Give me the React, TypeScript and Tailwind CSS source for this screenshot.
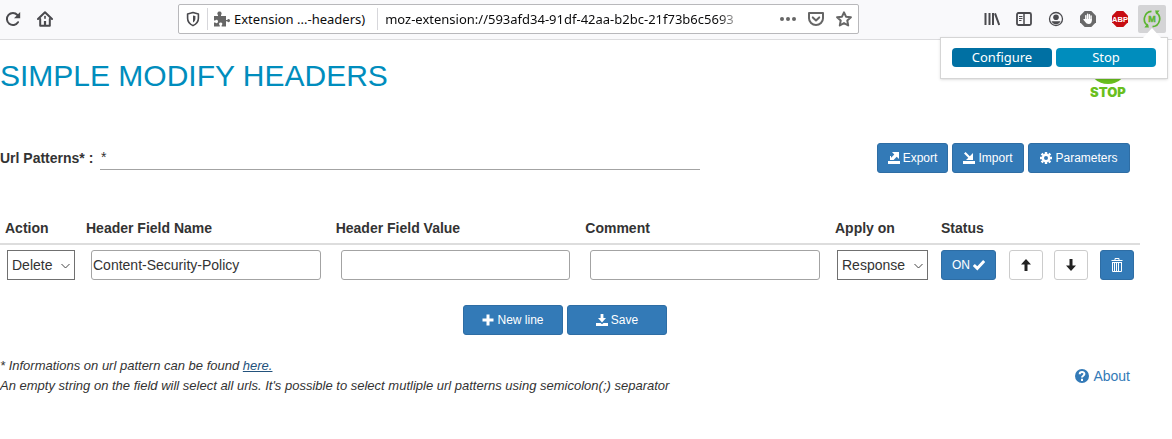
import React, { useState } from "react";

type IconProps = { className?: string };

const ReloadIcon = ({ className }: IconProps) => (
  <svg viewBox="0 0 16 16" className={className} fill="none" stroke="currentColor" strokeWidth="2" strokeLinecap="round">
    <path d="M13 11.200A6 6 0 1 1 12.400 4" />
    <path d="M15.200 1v6.200H9z" fill="currentColor" stroke="none" />
  </svg>
);

const HomeIcon = ({ className }: IconProps) => (
  <svg viewBox="0 0 16 16" className={className} fill="none" stroke="currentColor" strokeWidth="2" strokeLinecap="round" strokeLinejoin="round">
    <path d="M1 8l7-6.800L15 8" />
    <path d="M3.200 8v6.800h9.600V8" />
    <path d="M6.900 10h2.200v4.500H6.900z" fill="currentColor" stroke="none" />
    <path d="M8 5.600v1.600" strokeWidth="1.600" />
  </svg>
);

const ShieldIcon = ({ className }: IconProps) => (
  <svg viewBox="0 0 16 16" className={className} fill="none" stroke="currentColor" strokeWidth="1.600" strokeLinejoin="round">
    <path d="M8 1.600L13.400 3v4.200c0 3.400-2 5.800-5.400 7.400-3.400-1.600-5.400-4-5.400-7.400V3z" />
    <path d="M8 4.400v7.200c1.600-1 2.400-2.400 2.400-4.400V5z" fill="currentColor" stroke="none" />
  </svg>
);

const PuzzleIcon = ({ className }: IconProps) => (
  <svg viewBox="0 0 16 16" className={className} fill="currentColor">
    <path d="M0 5h4V4C3 3 3 .4 5.500.4S8 3 7 4v1h5v4h1.200c.6-1.500 2.800-1.200 2.800.6s-2.200 2.200-2.800.6H12V15.600H7.600V14.400c1.300-.8.9-2.800-.9-2.800s-2.200 2-.9 2.800v1.200H0v-4.200h1.200c.9 1.300 2.800.8 2.800-1s-1.900-2.300-2.800-1H0z" />
  </svg>
);

const PocketIcon = ({ className }: IconProps) => (
  <svg viewBox="0 0 16 16" className={className} fill="none" stroke="currentColor" strokeWidth="2" strokeLinecap="round" strokeLinejoin="round">
    <path d="M1 2h14v5.200a7 6.800 0 0 1-14 0z" />
    <path d="M4.800 6.400L8 9.400l3.200-3" />
  </svg>
);

const StarIcon = ({ className }: IconProps) => (
  <svg viewBox="0 0 16 16" className={className} fill="none" stroke="currentColor" strokeWidth="2" strokeLinejoin="round">
    <path d="M8 1.300l2 4.400 4.900.6-3.600 3.300.9 4.900L8 12.100l-4.200 2.400.9-4.900L1.100 6.300 6 5.700z" />
  </svg>
);

const LibraryIcon = ({ className }: IconProps) => (
  <svg viewBox="0 0 16 16" className={className} fill="none" stroke="currentColor" strokeWidth="2">
    <path d="M1.500 2v12M5.500 2v12M9 2v12M11 2.300L15.200 14" />
  </svg>
);

const SidebarIcon = ({ className }: IconProps) => (
  <svg viewBox="0 0 16 16" className={className} fill="none" stroke="currentColor">
    <rect x="1" y="2" width="14" height="12" rx="1.500" strokeWidth="1.800" />
    <path d="M8 2v12" strokeWidth="1.500" />
    <path d="M3 5.500h3.500M3 7.500h3.500M3 9.500h2.500" />
  </svg>
);

const AccountIcon = ({ className }: IconProps) => (
  <svg viewBox="0 0 16 16" className={className}>
    <circle cx="8" cy="8" r="6.500" fill="none" stroke="currentColor" strokeWidth="1.300" />
    <circle cx="8" cy="6.200" r="2.800" fill="currentColor" />
    <path d="M3.500 10.300h9c-.8 1.900-2.400 2.900-4.500 2.900s-3.700-1-4.500-2.900z" fill="currentColor" />
  </svg>
);

const HandIcon = ({ className }: IconProps) => (
  <svg viewBox="0 0 16 16" className={className}>
    <path d="M4.700 0h6.600L16 4.700v6.600L11.300 16H4.700L0 11.300V4.700z" fill="#696969" />
    <g stroke="#fff" strokeWidth="1.400" strokeLinecap="round" fill="none">
      <path d="M5.800 9V4.600M7.600 8V3.300M9.400 8V3.600M11.100 9V5" />
    </g>
    <path d="M5.100 8h6.700v1.500c0 2-1.100 3.500-3 3.500S6.200 12.300 5.300 11L3.400 8.800c-.3-.8.500-1.200 1.100-.7z" fill="#fff" />
  </svg>
);

const AdblockIcon = ({ className }: IconProps) => (
  <svg viewBox="0 0 16 16" className={className}>
    <path d="M4.700 0h6.600L16 4.700v6.600L11.300 16H4.700L0 11.300V4.700z" fill="#c70d12" />
    <text x="8" y="10.800" textAnchor="middle" fontSize="7.500" fontWeight="700" fill="#fff" fontFamily="Liberation Sans, sans-serif">ABP</text>
  </svg>
);

const ModifyIcon = ({ className }: IconProps) => (
  <svg viewBox="0 0 18 18" className={className} fill="none" stroke="#5cb531" strokeWidth="1.700">
    <path d="M5.200 15.800A7.800 7.800 0 0 1 8.500 1.300" />
    <path d="M12.800 2.200A7.800 7.800 0 0 1 9.500 16.700" />
    <path d="M12 .4l4.600.2-3 4zM6 17.600l-4.600-.2 3-4z" fill="#5cb531" stroke="none" />
    <text x="9" y="12.200" textAnchor="middle" fontSize="9" fontWeight="700" fill="#5cb531" stroke="#5cb531" strokeWidth=".4" fontFamily="Liberation Sans, sans-serif">M</text>
  </svg>
);

const ExportIcon = () => (
  <svg viewBox="0 0 12 12" className="size-3" fill="currentColor">
    <path d="M0 9h12v3H0zM4 0h7v7L8.700 4.800 5.600 8H2.300V6.500l4-4zM2 4h1v4H2z" />
  </svg>
);
const ImportIcon = () => (
  <svg viewBox="0 0 12 12" className="size-3" fill="currentColor">
    <path d="M0 9h12v3H0zM10 8H3l2.300-2.200L1 1.600 2.600 0l4.200 4.300L10 1z" />
  </svg>
);
const GearIcon = () => (
  <svg viewBox="0 0 12 12" className="size-3">
    <circle cx="6" cy="6" r="3.200" fill="none" stroke="currentColor" strokeWidth="2.400" />
    <path d="M6 0v2M6 10v2M0 6h2M10 6h2M1.600 1.600l1.600 1.600M8.800 8.800l1.600 1.600M10.400 1.600L8.800 3.200M3.200 8.800l-1.600 1.600" stroke="currentColor" strokeWidth="2.400" />
  </svg>
);
const CheckIcon = () => (
  <svg viewBox="0 0 12 12" className="size-3" fill="none" stroke="currentColor" strokeWidth="3">
    <path d="M.8 6l3.500 3.400L11.200 2" />
  </svg>
);
const PlusIcon = () => (
  <svg viewBox="0 0 12 12" className="size-3" stroke="currentColor" strokeWidth="3">
    <path d="M6 .5v11M.5 6h11" />
  </svg>
);
const SaveIcon = () => (
  <svg viewBox="0 0 12 12" className="size-3" fill="currentColor">
    <path d="M4.600 0h2.800v4H10L6 8.400 2 4h2.600zM0 9h4.500L6 10.300 7.500 9H12v3H0z" />
  </svg>
);
const UpIcon = () => (
  <svg viewBox="0 0 12 12" className="size-3" fill="currentColor">
    <path d="M6 0l5 5.600H7.500V12h-3V5.600H1z" />
  </svg>
);
const DownIcon = () => (
  <svg viewBox="0 0 12 12" className="size-3" fill="currentColor">
    <path d="M6 12L1 6.400h3.500V0h3v6.400H11z" />
  </svg>
);
const TrashIcon = () => (
  <svg viewBox="0 0 12 14" className="h-3.5 w-3" fill="none" stroke="currentColor">
    <path d="M4 2V.5h4V2M.5 2.500h11M1 4.500h10" />
    <path d="M1.500 4v9.500h9V4M3.500 5v8M5.500 5v8M7.500 5v8" />
  </svg>
);
const HelpIcon = () => (
  <svg viewBox="0 0 14 14" className="size-3.5">
    <circle cx="7" cy="7" r="7" fill="#337ab7" />
    <path d="M4.700 5.300c0-3 4.700-2.900 4.700-.2C9.400 6.900 7 6.600 7 8.600M7 9.800V12" fill="none" stroke="#fff" strokeWidth="2" />
  </svg>
);
const Chevron = () => (
  <svg viewBox="0 0 9 6" className="pointer-events-none absolute top-[13px] right-[5px] h-1.5 w-[9px]" fill="none" stroke="#444">
    <path d="M.5 1l4 4 4-4" />
  </svg>
);

const primary =
  "flex h-[30px] items-center justify-center gap-[3px] rounded-[3px] border border-[#2e6da4] bg-[#337ab7] text-xs text-white";
const plain =
  "flex h-[30px] w-[34px] items-center justify-center rounded-[3px] border border-[#ccc] bg-white text-[#222]";
const field = "block h-[30px] w-full rounded-[3px] border border-[#a3a3a3] bg-white px-px text-sm text-[#333]";
const select = "block h-[30px] w-full appearance-none border border-[#707070] bg-white pl-1 text-sm text-[#333]";

function Toolbar() {
  return (
    <header className="relative flex h-10 items-center border-b border-[#dcdcde] bg-[#f9f9fb] pb-px font-['Noto_Sans',sans-serif] text-[#4a4a4e]">
      <button aria-label="Reload" className="ml-[5px]"><ReloadIcon className="size-4" /></button>
      <button aria-label="Home" className="ml-4"><HomeIcon className="size-4" /></button>
      <div className="ml-[125px] flex h-[30px] max-w-[681px] flex-1 items-center rounded-[2px] border border-[#b8b8bb] bg-white">
        <button aria-label="Tracking protection" className="ml-1.5"><ShieldIcon className="size-4" /></button>
        <div className="ml-1.5 flex h-[22px] items-center border-x border-[#d7d7db] pr-3 pl-1.5">
          <PuzzleIcon className="size-4 text-[#666]" />
          <span className="ml-1 text-[13px] whitespace-nowrap text-[#0c0c0d]">Extension ...-headers)</span>
        </div>
        <label className="flex min-w-0 flex-1 [mask-image:linear-gradient(to_right,black_92%,transparent_99%)]">
          <span className="sr-only">Address</span>
          <input
            className="ml-[7px] w-full min-w-0 text-[13px] text-[#0c0c0d] outline-none"
            defaultValue="moz-extension://593afd34-91df-42aa-b2bc-21f73b6c5693"
          />
        </label>
        <button aria-label="Page actions" className="ml-8">
          <svg viewBox="0 0 16 16" className="size-4" fill="#666">
            <circle cx="2" cy="8" r="2" /><circle cx="8" cy="8" r="2" /><circle cx="14" cy="8" r="2" />
          </svg>
        </button>
        <button aria-label="Save to Pocket" className="ml-3 text-[#666]"><PocketIcon className="size-4" /></button>
        <button aria-label="Bookmark" className="mr-1.5 ml-3 text-[#666]"><StarIcon className="size-4" /></button>
      </div>
      <div className="ml-auto flex items-center gap-4 pr-1.5">
        <button aria-label="Library"><LibraryIcon className="size-4" /></button>
        <button aria-label="Sidebars"><SidebarIcon className="size-4" /></button>
        <button aria-label="Account"><AccountIcon className="size-4" /></button>
        <button aria-label="Blocker"><HandIcon className="size-4" /></button>
        <button aria-label="Adblock Plus"><AdblockIcon className="size-4" /></button>
        <button aria-label="Simple Modify Headers" className="-ml-1.5 flex size-7 items-center justify-center rounded-[2px] bg-[#d4d4d6]">
          <ModifyIcon className="size-[18px]" />
        </button>
      </div>
      <Popup />
    </header>
  );
}

function Popup() {
  return (
    <div className="absolute top-[37px] right-1 z-10 flex gap-1 border border-[#d5d5d5] bg-white px-[11px] pt-2.5 pb-[11px] shadow-sm">
      <svg viewBox="0 0 18 10" className="absolute -top-[10px] right-1.5 h-2.5 w-[18px]">
        <path d="M0 10L9 0l9 10z" fill="#fff" />
      </svg>
      <button className="h-[19px] w-[100px] rounded bg-[#0070a3] text-[13px] leading-[19px] text-white">Configure</button>
      <button className="h-[19px] w-[100px] rounded bg-[#008dbd] text-[13px] leading-[19px] text-white">Stop</button>
    </div>
  );
}

export default function App() {
  const [pattern, setPattern] = useState("*");
  const [name, setName] = useState("Content-Security-Policy");
  return (
    <div className="min-h-screen bg-white font-['Liberation_Sans',Arial,sans-serif] text-sm leading-5 text-[#333]">
      <Toolbar />
      <main className="max-w-[1140px]">
        <div className="flex items-start justify-between pr-3">
          <h1 className="mt-4 text-[30px] leading-10 text-[#008dbd]">SIMPLE MODIFY HEADERS</h1>
          <button className="flex flex-col items-center text-[#6abf1e]">
            <svg viewBox="0 0 40 44" className="h-11 w-10">
              <circle cx="20" cy="24" r="20" fill="currentColor" />
            </svg>
            <span className="font-[Inter,sans-serif] text-[13px] leading-4 font-black">STOP</span>
          </button>
        </div>
        <div className="mt-[43px] flex items-start justify-between pr-2.5">
          <div className="flex w-[700px] items-center">
            <label htmlFor="pattern" className="w-[100px] pt-0.5 font-bold whitespace-nowrap">Url Patterns* :</label>
            <input
              id="pattern"
              value={pattern}
              onChange={(e) => setPattern(e.target.value)}
              className="h-[27px] min-w-0 flex-1 border-b border-[#a3a3a3] px-px pt-0.5 outline-none"
            />
          </div>
          <div className="flex gap-1">
            <button className={`${primary} w-[71px]`}><ExportIcon />Export</button>
            <button className={`${primary} w-[72px]`}><ImportIcon />Import</button>
            <button className={`${primary} w-[102px]`}><GearIcon />Parameters</button>
          </div>
        </div>
        <table className="mt-[40px] w-full table-fixed text-left">
          <colgroup>
            <col className="w-[81px]" />
            <col /><col /><col />
            <col className="w-[106px]" />
            <col className="w-[68px]" />
            <col className="w-[45px]" />
            <col className="w-[46px]" />
            <col className="w-[45px]" />
          </colgroup>
          <thead>
            <tr className="border-b-2 border-[#ddd]">
              <th className="p-[5px]">Action</th>
              <th className="p-[5px]">Header Field Name</th>
              <th className="p-[5px]">Header Field Value</th>
              <th className="p-[5px]">Comment</th>
              <th className="p-[5px]">Apply on</th>
              <th className="p-[5px]">Status</th>
              <th /><th /><th />
            </tr>
          </thead>
          <tbody>
            <tr>
              <td className="py-[5px] pr-1.5 pl-[7px]">
                <div className="relative">
                  <select aria-label="Action" className={select}><option>Delete</option><option>Add</option><option>Modify</option></select>
                  <Chevron />
                </div>
              </td>
              <td className="px-2.5 py-[5px]">
                <input aria-label="Header Field Name" className={field} value={name} onChange={(e) => setName(e.target.value)} />
              </td>
              <td className="px-2.5 py-[5px]"><input aria-label="Header Field Value" className={field} /></td>
              <td className="px-2.5 py-[5px]"><input aria-label="Comment" className={field} /></td>
              <td className="py-[5px] pr-2 pl-[7px]">
                <div className="relative">
                  <select aria-label="Apply on" className={select}><option>Response</option><option>Request</option></select>
                  <Chevron />
                </div>
              </td>
              <td className="p-[5px]"><button className={`${primary} w-[55px]`}>ON<CheckIcon /></button></td>
              <td className="p-[5px]"><button aria-label="Move up" className={plain}><UpIcon /></button></td>
              <td className="p-[5px]"><button aria-label="Move down" className={plain}><DownIcon /></button></td>
              <td className="p-[5px]"><button aria-label="Delete line" className={`${primary} w-[34px]`}><TrashIcon /></button></td>
            </tr>
          </tbody>
        </table>
        <div className="mt-5 flex justify-center gap-1 pr-2.5">
          <button className={`${primary} w-[100px]`}><PlusIcon />New line</button>
          <button className={`${primary} w-[100px]`}><SaveIcon />Save</button>
        </div>
        <footer className="mt-[21px] flex items-center justify-between pr-2.5">
          <p className="text-[13px] italic">
            * Informations on url pattern can be found <a href="#patterns" className="text-[#23527c] underline">here.</a>
            <br />
            An empty string on the field will select all urls. It's possible to select mutliple url patterns using semicolon(;) separator
          </p>
          <a href="#about" className="flex items-center gap-1 text-[#337ab7]"><HelpIcon />About</a>
        </footer>
      </main>
    </div>
  );
}
